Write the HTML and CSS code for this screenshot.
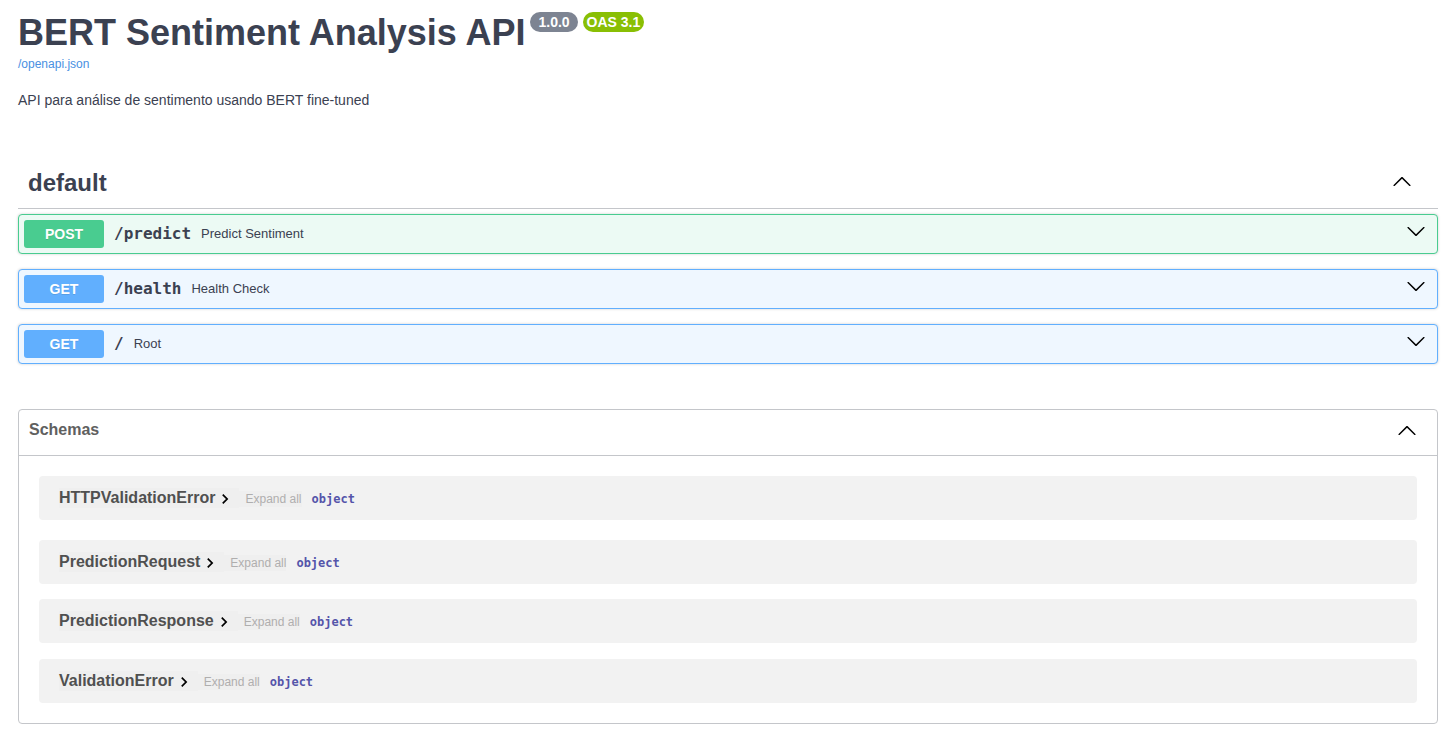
FILE: index.html
```html
<!DOCTYPE html>
<html lang="pt">
<head>
<meta charset="utf-8">
<meta name="viewport" content="width=device-width, initial-scale=1">
<title>BERT Sentiment Analysis API</title>
<link rel="stylesheet" href="styles.css">
</head>
<body>
<svg class="sprite" aria-hidden="true">
  <symbol id="arrow-down" viewBox="0 0 20 20"><path d="M17.418 6.109c.272-.268.709-.268.979 0s.271.701 0 .969l-7.908 7.83c-.27.268-.707.268-.979 0l-7.908-7.83c-.27-.268-.27-.701 0-.969.271-.268.709-.268.979 0L10 13.25l7.418-7.141z"/></symbol>
  <symbol id="arrow-up" viewBox="0 0 20 20"><path d="M17.418 14.908c.272.268.709.268.979 0s.271-.701 0-.969l-7.908-7.83c-.27-.268-.707-.268-.979 0l-7.908 7.83c-.27.268-.27.701 0 .969.271.268.709.268.979 0L10 7.767l7.418 7.141z"/></symbol>
  <symbol id="chevron" viewBox="0 0 24 24"><path d="M10 6L8.59 7.41 13.17 12l-4.58 4.59L10 18l6-6z"/></symbol>
</svg>
<main class="page">
  <header class="info">
    <div class="title-row">
      <h1 class="title">BERT Sentiment Analysis API</h1>
      <span class="badge badge-version">1.0.0</span>
      <span class="badge badge-oas">OAS 3.1</span>
    </div>
    <a class="spec-link" href="/openapi.json">/openapi.json</a>
    <p class="description">API para análise de sentimento usando BERT fine-tuned</p>
  </header>

  <section class="tag">
    <div class="tag-header">
      <h2 class="tag-name">default</h2>
      <button class="icon-button" type="button" aria-label="Collapse operation" aria-expanded="true"><svg class="arrow"><use href="#arrow-up"/></svg></button>
    </div>
    <div class="operations">
      <button class="operation post" type="button" aria-expanded="false">
        <span class="method">POST</span>
        <span class="path">/predict</span>
        <span class="summary">Predict Sentiment</span>
        <svg class="arrow"><use href="#arrow-down"/></svg>
      </button>
      <button class="operation get" type="button" aria-expanded="false">
        <span class="method">GET</span>
        <span class="path">/health</span>
        <span class="summary">Health Check</span>
        <svg class="arrow"><use href="#arrow-down"/></svg>
      </button>
      <button class="operation get" type="button" aria-expanded="false">
        <span class="method">GET</span>
        <span class="path">/</span>
        <span class="summary">Root</span>
        <svg class="arrow"><use href="#arrow-down"/></svg>
      </button>
    </div>
  </section>

  <section class="schemas">
    <h2 class="schemas-heading">
      <button class="schemas-toggle" type="button" aria-expanded="true">
        <span>Schemas</span>
        <svg class="arrow"><use href="#arrow-up"/></svg>
      </button>
    </h2>
    <div class="schema-list">
      <article class="schema">
        <button class="schema-name" type="button">HTTPValidationError<svg class="chevron"><use href="#chevron"/></svg></button>
        <button class="expand" type="button">Expand all</button>
        <strong class="type">object</strong>
      </article>
      <article class="schema">
        <button class="schema-name" type="button">PredictionRequest<svg class="chevron"><use href="#chevron"/></svg></button>
        <button class="expand" type="button">Expand all</button>
        <strong class="type">object</strong>
      </article>
      <article class="schema">
        <button class="schema-name" type="button">PredictionResponse<svg class="chevron"><use href="#chevron"/></svg></button>
        <button class="expand" type="button">Expand all</button>
        <strong class="type">object</strong>
      </article>
      <article class="schema">
        <button class="schema-name" type="button">ValidationError<svg class="chevron"><use href="#chevron"/></svg></button>
        <button class="expand" type="button">Expand all</button>
        <strong class="type">object</strong>
      </article>
    </div>
  </section>
</main>
</body>
</html>
```
FILE: styles.css
```css
*,
*::before,
*::after {
  box-sizing: border-box;
}

body {
  margin: 0;
  background: #fff;
  color: #3b4151;
  font-family: "Liberation Sans", Arial, sans-serif;
}

h1,
h2,
p {
  margin: 0;
}

button {
  margin: 0;
  padding: 0;
  border: 0;
  background: none;
  color: inherit;
  font: inherit;
  text-align: left;
  cursor: pointer;
}

.sprite {
  position: absolute;
  width: 0;
  height: 0;
}

.page {
  padding: 12px 8px 10px 18px;
}

.title-row {
  display: flex;
  align-items: flex-start;
  gap: 5px;
}

.title {
  font-size: 36px;
  line-height: 42px;
}

.badge {
  border-radius: 10px;
  color: #fff;
  font-size: 14px;
  font-weight: 700;
  line-height: 20px;
}

.badge-version {
  padding: 0 8px;
  background: #7d8492;
}

.badge-oas {
  padding: 0 4px;
  background: #89bf04;
}

.spec-link {
  display: block;
  width: fit-content;
  margin-top: 2px;
  color: #4990e2;
  font-size: 12px;
  line-height: 16px;
  text-decoration: none;
}

.description {
  margin-top: 20px;
  font-size: 14px;
  line-height: 16px;
}

.tag {
  margin-top: 50px;
}

.tag-header {
  display: flex;
  align-items: center;
  justify-content: space-between;
  padding: 10px 26px 10px 10px;
  border-bottom: 1px solid #c4c6ca;
}

.tag-name {
  font-size: 24px;
  line-height: 30px;
}

.icon-button {
  display: flex;
  padding-bottom: 4px;
}

.arrow {
  display: block;
  flex: none;
  width: 20px;
  height: 20px;
  fill: #000;
}

.operations {
  display: grid;
  gap: 15px;
  padding-top: 5px;
}

.operation {
  display: flex;
  align-items: center;
  gap: 10px;
  padding: 5px 11px 5px 5px;
  border: 1px solid;
  border-radius: 4px;
  box-shadow: 0 0 3px rgba(0, 0, 0, 0.19);
}

.operation .arrow {
  margin: 0 0 6px auto;
}

.post {
  border-color: #49cc90;
  background: #ecfaf4;
}

.get {
  border-color: #61affe;
  background: #eff7ff;
}

.method {
  width: 80px;
  padding: 6px 0;
  border-radius: 3px;
  color: #fff;
  font-size: 14px;
  font-weight: 700;
  line-height: 16px;
  text-align: center;
  text-shadow: 0 1px 0 rgba(0, 0, 0, 0.1);
}

.post .method {
  background: #49cc90;
}

.get .method {
  background: #61affe;
}

.path {
  font-family: "DejaVu Sans Mono", monospace;
  font-size: 16px;
  font-weight: 700;
  line-height: 20px;
}

.summary {
  font-size: 13px;
  line-height: 16px;
}

.schemas {
  margin-top: 45px;
  border: 1px solid #c4c6ca;
  border-radius: 4px;
}

.schemas-heading {
  border-bottom: 1px solid #c4c6ca;
  color: #606060;
  font-size: 16px;
  line-height: 20px;
}

.schemas-toggle {
  display: flex;
  align-items: center;
  justify-content: space-between;
  width: 100%;
  padding: 10px 20px 15px 10px;
}

.schema-list {
  display: grid;
  gap: 15px;
  padding: 20px;
}

.schema {
  display: flex;
  align-items: center;
  padding: 12px 20px;
  border-radius: 4px;
  background: #f2f2f2;
}

.schema:first-child {
  margin-bottom: 5px;
}

.schema:last-child {
  margin-top: 1px;
}

.schema-name {
  display: flex;
  align-items: center;
  padding-right: 4px;
  background: #efefef;
  color: #505050;
  font-size: 16px;
  font-weight: 700;
  line-height: 20px;
}

.chevron {
  width: 20px;
  height: 20px;
  margin: 1px 0 -1px;
  fill: #000;
}

.expand {
  margin-top: 2px;
  padding-left: 6px;
  background: #efefef;
  color: #afaeae;
  font-size: 12px;
  line-height: 16px;
}

.type {
  margin: 2px 0 0 10px;
  color: #5555aa;
  font-family: "DejaVu Sans Mono", monospace;
  font-size: 12px;
  line-height: 16px;
}
```
